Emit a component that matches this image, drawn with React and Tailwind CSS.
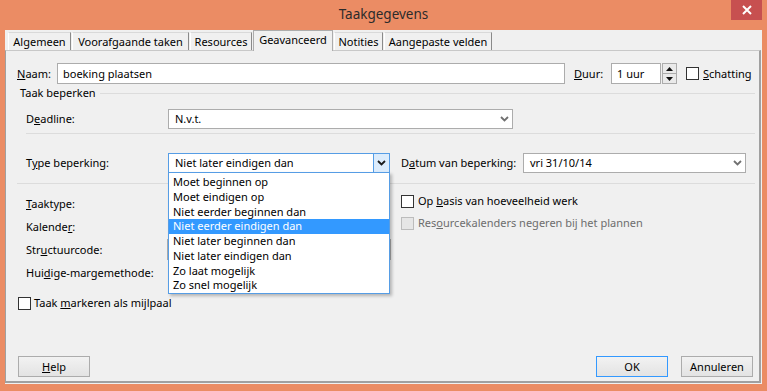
import React from "react";

const Chevron = ({ dark }) => (
  <svg width="9" height="6" viewBox="0 0 9 6">
    <path d="M1 1 L4.5 4.5 L8 1" fill="none" stroke={dark ? "#1a1a1a" : "#707070"} strokeWidth="1.8" />
  </svg>
);

const Combo = ({ w, text, focused }) => (
  <div
    className={`flex items-center h-[20px] bg-white border ${
      focused ? "border-[#569DE5]" : "border-[#ACACAC]"
    } ${w}`}
  >
    <span className="flex-1 pl-[6px] truncate">{text}</span>
    {focused ? (
      <div className="w-[16px] h-full flex items-center justify-center bg-[#DCECFC] border-l border-[#569DE5]">
        <Chevron dark />
      </div>
    ) : (
      <div className="w-[16px] h-full flex items-center justify-center">
        <Chevron />
      </div>
    )}
  </div>
);

const Check = ({ disabled }) => (
  <div
    className={`w-[13px] h-[13px] border ${
      disabled ? "bg-[#E6E6E6] border-[#BCBCBC]" : "bg-white border-[#333333]"
    }`}
  />
);

const tabs = [
  ["Algemeen", "w-[63px]"],
  ["Voorafgaande taken", "w-[117px]"],
  ["Resources", "w-[62px]"],
  ["Geavanceerd", "w-[80px]"],
  ["Notities", "w-[49px]"],
  ["Aangepaste velden", "w-[108px]"],
];

const options = [
  "Moet beginnen op",
  "Moet eindigen op",
  "Niet eerder beginnen dan",
  "Niet eerder eindigen dan",
  "Niet later beginnen dan",
  "Niet later eindigen dan",
  "Zo laat mogelijk",
  "Zo snel mogelijk",
];

export default function App() {
  return (
    <div className="w-[767px] h-[391px] bg-[#EB8C64] flex flex-col font-['Noto_Sans',sans-serif] text-[11px] leading-[16px] text-black overflow-hidden whitespace-nowrap">
      {/* title bar */}
      <div className="h-[30px] flex items-start relative shrink-0">
        <div className="flex-1 text-center text-[13.5px] leading-[20px] pt-[4px] text-[#2b2b2b]">Taakgegevens</div>
        <div className="absolute right-[5px] top-0 w-[31px] h-[20px] bg-[#C75050] flex items-center justify-center">
          <svg width="10" height="10" viewBox="0 0 10 10">
            <path d="M1 1 L9 9 M9 1 L1 9" stroke="white" strokeWidth="2" />
          </svg>
        </div>
      </div>

      {/* dialog body */}
      <div className="ml-[5px] w-[757px] h-[354px] bg-[#F0F0F0] flex flex-col">
        {/* tab strip */}
        <div className="h-[20px] flex items-end pl-[2px] shrink-0">
          {tabs.map(([t, w]) =>
            t === "Geavanceerd" ? (
              <div
                key={t}
                className={`relative z-10 h-[21px] -mb-[1px] ml-[1px] bg-[#F0F0F0] border border-b-0 border-[#ACACAC] flex items-center justify-center pb-[2px] ${w}`}
              >
                {t}
              </div>
            ) : (
              <div
                key={t}
                className={`h-[18px] ml-[1px] bg-[#F0F0F0] border border-b-0 border-l-white border-t-[#D9D9D9] border-r-[#8A8A8A] flex items-center justify-center ${w}`}
              >
                {t}
              </div>
            )
          )}
        </div>

        {/* tab panel */}
        <div className="relative flex-1 mb-[1px] w-[756px] border-l border-t border-r-2 border-b-2 border-l-[#A0A0A0] border-t-[#C8C8C8] border-r-[#A0A0A0] border-b-[#A0A0A0] flex flex-col pl-[11px] pr-[4px] pb-[4px]">
          {/* Naam row */}
          <div className="mt-[12px] h-[21px] flex items-center">
            <span className="w-[40px]">
              <u>N</u>aam:
            </span>
            <div className="w-[508px] h-[21px] bg-white border border-[#ACACAC] flex items-center pl-[5px]">
              boeking plaatsen
            </div>
            <span className="ml-[9px] w-[37px]">
              <u>D</u>uur:
            </span>
            <div className="w-[50px] h-[21px] bg-white border border-[#ACACAC] flex items-center pl-[5px]">1 uur</div>
            <div className="ml-[1px] w-[15px] h-[21px] flex flex-col">
              <div className="flex-1 bg-[#EAEAEA] border border-[#ACACAC] flex items-center justify-center">
                <svg width="7" height="4" viewBox="0 0 7 4">
                  <path d="M0 4 L3.5 0 L7 4 Z" fill="#111" />
                </svg>
              </div>
              <div className="flex-1 bg-[#EAEAEA] border border-t-0 border-[#ACACAC] flex items-center justify-center">
                <svg width="7" height="4" viewBox="0 0 7 4">
                  <path d="M0 0 L3.5 4 L7 0 Z" fill="#111" />
                </svg>
              </div>
            </div>
            <div className="ml-[9px]">
              <Check />
            </div>
            <span className="ml-[4px]">
              <u>S</u>chatting
            </span>
          </div>

          {/* group header */}
          <div className="mt-[1px] h-[16px] flex items-center pl-[3px]">
            <span>Taak beperken</span>
            <div className="flex-1 h-px bg-[#DCDCDC] ml-[4px]" />
          </div>

          {/* Deadline */}
          <div className="mt-[7px] h-[21px] flex items-center pl-[9px]">
            <span className="w-[142px]">
              D<u>e</u>adline:
            </span>
            <Combo w="w-[345px]" text="N.v.t." />
          </div>
          <div className="mt-[4px] ml-[9px] h-px bg-[#DCDCDC]" />

          {/* Type beperking */}
          <div className="mt-[19px] h-[20px] flex items-center pl-[9px]">
            <span className="w-[142px]">
              T<u>y</u>pe beperking:
            </span>
            <Combo w="w-[222px]" text="Niet later eindigen dan" focused />
            <span className="ml-[11px] w-[122px]">
              D<u>a</u>tum van beperking:
            </span>
            <Combo w="w-[223px]" text="vri 31/10/14" />
          </div>
          <div className="mt-[10px] h-px bg-[#DCDCDC]" />

          {/* two columns */}
          <div className="flex">
            <div className="w-[384px] pl-[9px] mt-[8px] flex flex-col">
              {[
                [<><u>T</u>aaktype:</>, "combo"],
                [<>Kalende<u>r</u>:</>, "combo"],
                [<>Str<u>u</u>ctuurcode:</>, "text"],
                [<>Hui<u>d</u>ige-margemethode:</>, "combo"],
              ].map(([label, kind], i) => (
                <div key={i} className="h-[23px] flex items-center">
                  <span className="w-[141px]">{label}</span>
                  {kind === "text" ? (
                    <div className="w-[224px] h-[21px] bg-white border border-[#ACACAC]" />
                  ) : (
                    <div className="ml-[1px] w-[222px] h-[21px] bg-white border border-[#ACACAC]" />
                  )}
                </div>
              ))}
            </div>
            <div className="mt-[6px] flex flex-col">
              <div className="h-[22px] flex items-center">
                <Check />
                <span className="ml-[4px]">
                  Op <u>b</u>asis van hoeveelheid werk
                </span>
              </div>
              <div className="h-[22px] flex items-center">
                <Check disabled />
                <span className="ml-[4px] text-[#6D6D6D]">
                  Res<u>o</u>urcekalenders negeren bij het plannen
                </span>
              </div>
            </div>
          </div>

          {/* mijlpaal */}
          <div className="mt-[11px] h-[16px] flex items-center pl-[1px]">
            <Check />
            <span className="ml-[3px]">
              Taak <u>m</u>arkeren als mijlpaal
            </span>
          </div>

          {/* buttons */}
          <div className="mt-auto flex items-center pl-[1px] pr-[2px]">
            <button className="w-[72px] h-[21px] bg-gradient-to-b from-[#F2F2F2] to-[#E3E3E3] border border-[#ACACAC]">
              <u>H</u>elp
            </button>
            <button className="ml-auto w-[72px] h-[21px] bg-gradient-to-b from-[#F2F2F2] to-[#E3E3E3] border border-[#3399FF]">
              OK
            </button>
            <button className="ml-[13px] w-[72px] h-[21px] bg-gradient-to-b from-[#F2F2F2] to-[#E3E3E3] border border-[#ACACAC]">
              Annuleren
            </button>
          </div>

          {/* open dropdown list */}
          <div className="absolute left-[162px] top-[121px] w-[222px] h-[122px] bg-white border border-[#569DE5] pt-[2px] shadow-[2px_2px_3px_rgba(0,0,0,0.25)] z-20">
            {options.map((o) => (
              <div
                key={o}
                className={`h-[14.75px] leading-[14.75px] pl-[4px] ${
                  o === "Niet eerder eindigen dan" ? "bg-[#3399FF] text-white" : ""
                }`}
              >
                {o}
              </div>
            ))}
          </div>
        </div>
      </div>
    </div>
  );
}
